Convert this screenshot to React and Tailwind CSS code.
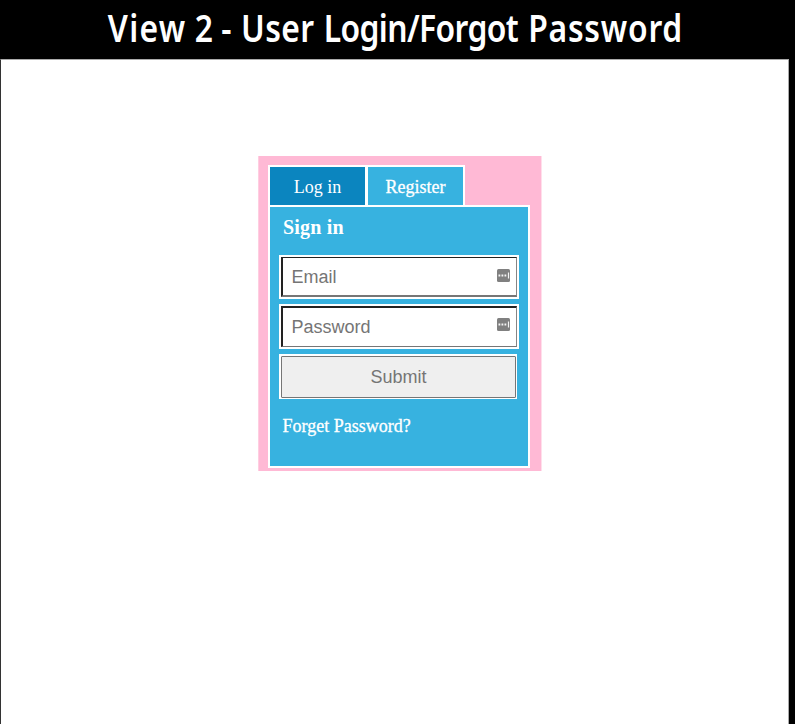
function ManagerIcon() {
  return (
    <svg className="block h-[13px] w-[13px]" viewBox="0 0 13 13" aria-hidden="true">
      <rect width="13" height="13" rx="1.5" fill="#808080" />
      <path d="M1.5 5.5h1.8v2H1.5zM4.5 5.5h1.8v2H4.5zM7.5 5.5h1.8v2H7.5z" fill="#f5f5f5" />
      <path d="M11.5 3.5v6" stroke="#f5f5f5" strokeWidth="1.2" />
    </svg>
  );
}

function Field({ label, className, iconClass }) {
  return (
    <div className="w-[240px] bg-white p-[2px]">
      <div className={`flex justify-between border-t-[#222] border-r-[#858585] border-b-[#767676] border-l-[#222] bg-white pr-[6px] pl-[8.5px] ${className}`}>
        <span className="font-['Liberation_Sans',Arial,sans-serif] text-[18px] leading-[38px] text-[#757575]">{label}</span>
        <span className={iconClass}><ManagerIcon /></span>
      </div>
    </div>
  );
}

export default function App() {
  return (
    <div className="h-[724px] w-[800px] overflow-hidden bg-white font-['Liberation_Serif','Times_New_Roman',serif]">
      <div className="h-full w-[795px] bg-black">
        <header className="flex h-[59px] justify-center pr-[5px]">
          <h1 className="origin-center scale-x-[0.86] font-['Noto_Sans','Open_Sans',sans-serif] text-[37px] leading-[56px] font-semibold whitespace-nowrap text-white">
            <span className="tracking-[1.5px]">View</span>{' '}
            <span>2</span>{' '}
            <span className="tracking-[1.5px]">-</span>{' '}
            <span className="tracking-[0.5px]">User</span>{' '}
            <span className="mr-[2px] ml-[1px] tracking-[-0.7px]">Login/Forgot</span>{' '}
            <span className="tracking-[0.9px]">Password</span>
          </h1>
        </header>
        <main className="h-[665px] w-[789px] border-t border-r border-l border-t-[#aaa] border-r-[#aaa] border-l-[#333] bg-white pt-[96px] pl-[257px]">
          <section className="h-[315px] w-[284px] border-r border-l border-r-[#ffdfeb] border-l-[#ffcee1] bg-[#ffb9d5] pt-[9px] pl-[9px]">
            <nav className="flex h-[40px] w-[197px] gap-[3px] bg-white px-[2px] pt-[2px] text-[18px] leading-[40px] text-white">
              <div className="h-[38px] w-[95px] bg-[#0b85bf] text-center">Log in</div>
              <div className="h-[38px] flex-1 bg-[#37b2e0] text-center [-webkit-text-stroke:0.3px_white]">Register</div>
            </nav>
            <div className="h-[263px] w-[262px] border-2 border-white bg-[#37b2e0] pl-[9px] text-white">
              <h2 className="h-[48px] pl-[4px] text-[20px] leading-[41px] font-bold tracking-[0.2px]">Sign in</h2>
              <div className="flex flex-col gap-[5px]">
                <Field label="Email" className="h-[40px] border-t border-r border-b-2 border-l-2" iconClass="pt-[11px]" />
                <Field label="Password" className="h-[41px] border-t-2 border-r border-b border-l-2" iconClass="pt-[10px]" />
                <div className="h-[45px] w-[238px] bg-white p-[2px]">
                  <button className="block h-[42px] w-[235px] rounded-[1px] border border-[#767676] bg-[#efefef] font-['Liberation_Sans',Arial,sans-serif] text-[18px] leading-[40px] text-[#757575]">Submit</button>
                </div>
              </div>
              <p className="pt-[7px] pl-[3.5px] text-[18px] leading-[40px] [-webkit-text-stroke:0.3px_white]">Forget Password?</p>
            </div>
          </section>
        </main>
      </div>
    </div>
  );
}
